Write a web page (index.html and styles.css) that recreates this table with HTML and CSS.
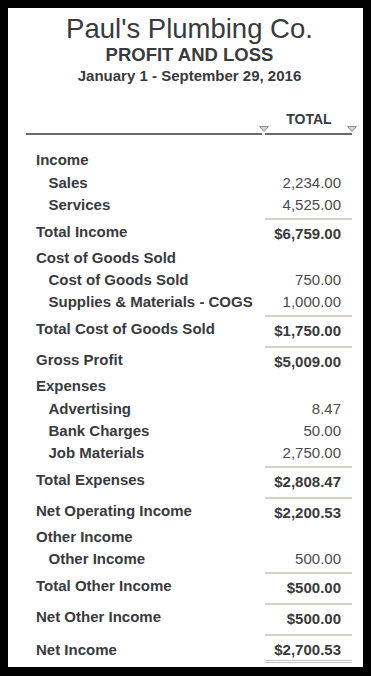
FILE: index.html
```html
<!DOCTYPE html>
<html lang="en">
<head>
<meta charset="utf-8">
<title>Profit and Loss</title>
<link rel="stylesheet" href="styles.css">
</head>
<body>
<div class="report">
  <header class="report-head">
    <div class="company">Paul's Plumbing Co.</div>
    <div class="title">PROFIT AND LOSS</div>
    <div class="period">January 1 - September 29, 2016</div>
  </header>
  <div class="cols">
    <div class="col col-label">
      <svg class="sort" width="10" height="6" viewBox="0 0 10 6"><polygon points="0.5,0.5 9.5,0.5 5,5.5" fill="#d2d2d2" stroke="#8f8f8f" stroke-width="1"/></svg>
    </div>
    <div class="col col-total">TOTAL
      <svg class="sort" width="10" height="6" viewBox="0 0 10 6"><polygon points="0.5,0.5 9.5,0.5 5,5.5" fill="#d2d2d2" stroke="#8f8f8f" stroke-width="1"/></svg>
    </div>
  </div>
  <div class="rows">
    <div class="row hdr"><span class="lbl">Income</span><span class="val"></span></div>
    <div class="row det"><span class="lbl">Sales</span><span class="val">2,234.00</span></div>
    <div class="row det"><span class="lbl">Services</span><span class="val">4,525.00</span></div>
    <div class="row tot"><span class="lbl">Total Income</span><span class="val">$6,759.00</span></div>
    <div class="row hdr"><span class="lbl">Cost of Goods Sold</span><span class="val"></span></div>
    <div class="row det"><span class="lbl">Cost of Goods Sold</span><span class="val">750.00</span></div>
    <div class="row det"><span class="lbl">Supplies &amp; Materials - COGS</span><span class="val">1,000.00</span></div>
    <div class="row tot"><span class="lbl">Total Cost of Goods Sold</span><span class="val">$1,750.00</span></div>
    <div class="row tot"><span class="lbl">Gross Profit</span><span class="val">$5,009.00</span></div>
    <div class="row hdr"><span class="lbl">Expenses</span><span class="val"></span></div>
    <div class="row det"><span class="lbl">Advertising</span><span class="val">8.47</span></div>
    <div class="row det"><span class="lbl">Bank Charges</span><span class="val">50.00</span></div>
    <div class="row det"><span class="lbl">Job Materials</span><span class="val">2,750.00</span></div>
    <div class="row tot"><span class="lbl">Total Expenses</span><span class="val">$2,808.47</span></div>
    <div class="row tot"><span class="lbl">Net Operating Income</span><span class="val">$2,200.53</span></div>
    <div class="row hdr"><span class="lbl">Other Income</span><span class="val"></span></div>
    <div class="row det"><span class="lbl">Other Income</span><span class="val">500.00</span></div>
    <div class="row tot"><span class="lbl">Total Other Income</span><span class="val">$500.00</span></div>
    <div class="row tot"><span class="lbl">Net Other Income</span><span class="val">$500.00</span></div>
    <div class="row net"><span class="lbl">Net Income</span><span class="val">$2,700.53</span></div>
  </div>
</div>
</body>
</html>
```
FILE: styles.css
```css
html {
  background: #000;
}
body {
  margin: 8px;
  background: #fff;
  height: 659px;
  overflow: hidden;
  font-family: "Liberation Sans", Arial, sans-serif;
  color: #393a3d;
}
.report {
  padding: 6px 11px 0 18px;
}
.report-head {
  text-align: center;
  padding-left: 1px;
}
.company {
  font-size: 27.5px;
  line-height: 30px;
}
.title {
  font-size: 18.5px;
  font-weight: bold;
  line-height: 22px;
}
.period {
  font-size: 15px;
  font-weight: bold;
  line-height: 20px;
}
.cols {
  display: flex;
  margin-top: 25px;
}
.col {
  position: relative;
  border-bottom: 2px solid #6a6a6a;
  height: 24px;
  box-sizing: border-box;
}
.col-label {
  flex: 1;
}
.col-total {
  width: 87px;
  margin-left: 3px;
  text-align: center;
  font-size: 14px;
  font-weight: bold;
  line-height: 16px;
  padding-left: 1px;
}
.sort {
  position: absolute;
  display: block;
}
.col-label .sort {
  right: -7px;
  top: 15px;
}
.col-total .sort {
  right: -5px;
  top: 15px;
}
.rows {
  margin-top: 14px;
}
.row {
  display: flex;
  font-size: 15px;
}
.lbl {
  flex: 1;
  padding-left: 10px;
  font-weight: bold;
  white-space: nowrap;
}
.val {
  width: 87px;
  margin-left: 3px;
  padding-right: 11px;
  box-sizing: border-box;
  text-align: right;
  white-space: nowrap;
}
.hdr {
  height: 22.5px;
  line-height: 22px;
}
.det {
  height: 22px;
  line-height: 22px;
}
.det .lbl {
  padding-left: 22.5px;
}
.det .val {
  color: #4a4a4d;
}
.tot {
  height: 31px;
}
.tot .lbl {
  padding-top: 2px;
  line-height: 27px;
}
.tot .val {
  margin-top: 2px;
  border-top: 2px solid #d3d3ca;
  line-height: 27px;
  font-weight: bold;
}
.net .lbl {
  padding-top: 10px;
  line-height: 16px;
}
.net .val {
  margin-top: 2px;
  border-top: 2px solid #d3d3ca;
  padding-top: 6px;
  padding-bottom: 2px;
  line-height: 16px;
  font-weight: bold;
  border-bottom: 3px double #c9c9c0;
}
```
